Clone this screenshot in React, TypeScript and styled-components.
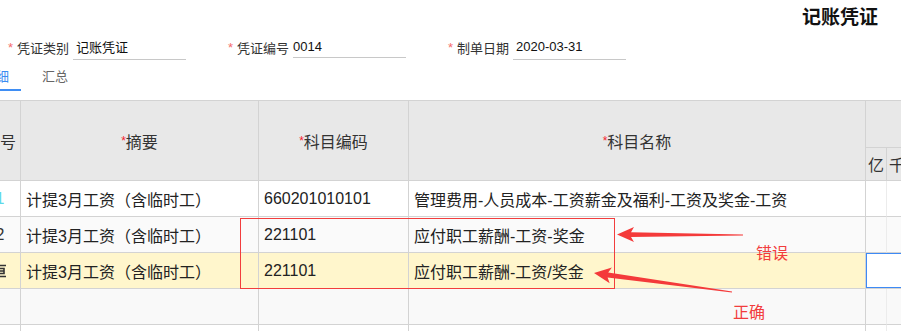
import React from "react";
import styled, { createGlobalStyle } from "styled-components";

const GlobalStyle = createGlobalStyle`
  html, body { margin: 0; padding: 0; background: #fff; overflow: hidden; }
  body { font-family: "Liberation Sans", "Noto Sans CJK SC", sans-serif; }
`;

const Page = styled.div`
  position: relative;
  width: 901px;
  height: 331px;
  overflow: hidden;
  background: #fff;
`;

const TitleBar = styled.div`
  height: 30px;
  display: flex;
  justify-content: flex-end;
  align-items: center;
  padding-right: 23px;
  font-size: 19px;
  font-weight: bold;
  color: #111;
`;

const FormRow = styled.div`
  height: 34px;
  display: flex;
  align-items: center;
  gap: 42px;
  padding-left: 8px;
`;

const FormItem = styled.div`
  display: flex;
  align-items: center;
  font-size: 13px;
`;

const Star = styled.span`
  width: 9px;
  color: #f56c6c;
  font-size: 13px;
`;

const Label = styled.span`
  width: 52px;
  margin-right: 4px;
  color: #333;
  white-space: nowrap;
`;

const Field = styled.div<{ $w: number; $h: number; $pad: number }>`
  box-sizing: border-box;
  width: ${(p) => p.$w}px;
  height: ${(p) => p.$h}px;
  padding-left: ${(p) => p.$pad}px;
  display: flex;
  align-items: center;
  border-bottom: 1px solid #c8c8c8;
  color: #111;
`;

const TabBar = styled.div`
  display: flex;
  gap: 9px;
  margin-left: -29px;
  height: 27px;
`;

const Tab = styled.div<{ $active?: boolean }>`
  box-sizing: border-box;
  height: 27px;
  padding: 0 12px;
  font-size: 13px;
  line-height: 25px;
  color: ${(p) => (p.$active ? "#3a8cf2" : "#666")};
  border-bottom: 2px solid ${(p) => (p.$active ? "#3f8ef4" : "transparent")};
`;

const TableWrap = styled.div`
  margin-top: 9px;
  overflow: hidden;
  width: 901px;
`;

const Table = styled.table`
  margin-left: -20px;
  border-collapse: separate;
  border-spacing: 0;
  table-layout: fixed;
  width: 1117px;
  border-top: 1px solid #d3d3d3;
  font-size: 16px;
  color: #222;
`;

const HeadRow = styled.tr<{ $h: number }>`
  height: ${(p) => p.$h}px;
`;

const Th = styled.th`
  box-sizing: border-box;
  padding: 0;
  background: #e8e8e8;
  border-right: 1px solid #d3d3d3;
  border-bottom: 1px solid #d3d3d3;
  font-weight: normal;
  color: #333;
  text-align: center;
  vertical-align: middle;
  white-space: nowrap;
  overflow: hidden;
`;

const ReqStar = styled.span`
  color: #f5222d;
  font-size: 12px;
  vertical-align: baseline;
  position: relative;
  top: -3px;
`;

const BodyRow = styled.tr<{ $bg: string }>`
  height: 36px;
  background: ${(p) => p.$bg};
`;

const Td = styled.td`
  box-sizing: border-box;
  padding: 0 0 0 5px;
  border-right: 1px solid #d3d3d3;
  border-bottom: 1px solid #d3d3d3;
  white-space: nowrap;
  overflow: hidden;
  vertical-align: middle;
`;

const NoTd = styled.td<{ $color?: string }>`
  box-sizing: border-box;
  padding: 0;
  text-align: center;
  border-right: 1px solid #d3d3d3;
  border-bottom: 1px solid #d3d3d3;
  color: ${(p) => p.$color || "#333"};
  white-space: nowrap;
  overflow: hidden;
  vertical-align: middle;
`;

const AmtTd = styled.td`
  box-sizing: border-box;
  padding: 0;
  border-right: 1px solid #ececec;
  border-bottom: 1px solid #d3d3d3;
`;

const EditTd = styled.td`
  box-sizing: border-box;
  padding: 0;
  background: #fff;
  box-shadow: inset 0 0 0 1px #3d8af5;
  border-bottom: 1px solid #d3d3d3;
`;

const AnnoBox = styled.div`
  position: absolute;
  left: 240px;
  top: 218px;
  width: 375px;
  height: 71px;
  box-sizing: border-box;
  border: 1px solid #f23d3d;
  pointer-events: none;
`;

const Arrows = styled.svg`
  position: absolute;
  left: 0;
  top: 0;
  pointer-events: none;
`;

const AnnoText = styled.div<{ $x: number; $y: number }>`
  position: absolute;
  left: ${(p) => p.$x}px;
  top: ${(p) => p.$y}px;
  font-family: "Noto Sans CJK SC", sans-serif;
  font-size: 16px;
  line-height: 16px;
  color: #f23d3d;
`;

const colWidths = [41, 238, 150, 457, ...Array(11).fill(21)];
const units = ["亿", "千", "百", "十", "万", "千", "百", "十", "元", "角", "分"];

const RowIcon = () => (
  <svg width="14" height="14" viewBox="0 0 14 14" style={{ display: "block", margin: "0 auto" }}>
    <path d="M1 1.5h12M3 4.5h8v5H3zM3 7h8M1 12.5h12" stroke="#333" strokeWidth="1.6" fill="none" />
  </svg>
);

type Row = { no: React.ReactNode; noColor?: string; summary: string; code: string; name: string; bg: string; edit?: boolean };

const rows: Row[] = [
  { no: "1", noColor: "#5fd8e8", summary: "计提3月工资（含临时工）", code: "660201010101", name: "管理费用-人员成本-工资薪金及福利-工资及奖金-工资", bg: "#fff" },
  { no: "2", summary: "计提3月工资（含临时工）", code: "221101", name: "应付职工薪酬-工资-奖金", bg: "#fafafa" },
  { no: <RowIcon />, summary: "计提3月工资（含临时工）", code: "221101", name: "应付职工薪酬-工资/奖金", bg: "#fff6cc", edit: true },
  { no: "", summary: "", code: "", name: "", bg: "#f9f9f9" },
  { no: "", summary: "", code: "", name: "", bg: "#fff" },
];

export default function App() {
  return (
    <Page>
      <GlobalStyle />
      <TitleBar>记账凭证</TitleBar>
      <FormRow>
        <FormItem>
          <Star>*</Star>
          <Label>凭证类别</Label>
          <Field $w={113} $h={26} $pad={3}>记账凭证</Field>
        </FormItem>
        <FormItem>
          <Star>*</Star>
          <Label>凭证编号</Label>
          <Field $w={113} $h={21} $pad={0}>0014</Field>
        </FormItem>
        <FormItem>
          <Star>*</Star>
          <Label>制单日期</Label>
          <Field $w={113} $h={26} $pad={3}>2020-03-31</Field>
        </FormItem>
      </FormRow>
      <TabBar>
        <Tab $active>明细</Tab>
        <Tab>汇总</Tab>
      </TabBar>
      <TableWrap>
        <Table>
          <colgroup>
            {colWidths.map((w, i) => (
              <col key={i} style={{ width: w }} />
            ))}
          </colgroup>
          <thead>
            <HeadRow $h={47}>
              <Th rowSpan={2}>序号</Th>
              <Th rowSpan={2}>
                <ReqStar>*</ReqStar>摘要
              </Th>
              <Th rowSpan={2}>
                <ReqStar>*</ReqStar>科目编码
              </Th>
              <Th rowSpan={2}>
                <ReqStar>*</ReqStar>科目名称
              </Th>
              <Th colSpan={11}>借方金额</Th>
            </HeadRow>
            <HeadRow $h={33}>
              {units.map((u, i) => (
                <Th key={i}>{u}</Th>
              ))}
            </HeadRow>
          </thead>
          <tbody>
            {rows.map((r, i) => (
              <BodyRow key={i} $bg={r.bg}>
                <NoTd $color={r.noColor}>{r.no}</NoTd>
                <Td>{r.summary}</Td>
                <Td>{r.code}</Td>
                <Td>{r.name}</Td>
                {r.edit ? (
                  <EditTd colSpan={11} />
                ) : (
                  units.map((_, j) => <AmtTd key={j} />)
                )}
              </BodyRow>
            ))}
          </tbody>
        </Table>
      </TableWrap>
      <AnnoBox />
      <Arrows width="901" height="331" viewBox="0 0 901 331">
        <polygon
          points="617,234.5 634,227 631,232.2 743,234.4 743,235.4 631,237 634,242"
          fill="#f43a3a"
        />
        <polygon
          points="594,273 611.9,267.4 608.2,272.4 732.07,291.5 731.93,292.5 607.6,277.4 609.7,283.2"
          fill="#f43a3a"
        />
      </Arrows>
      <AnnoText $x={756} $y={244}>错误</AnnoText>
      <AnnoText $x={733} $y={303}>正确</AnnoText>
    </Page>
  );
}
